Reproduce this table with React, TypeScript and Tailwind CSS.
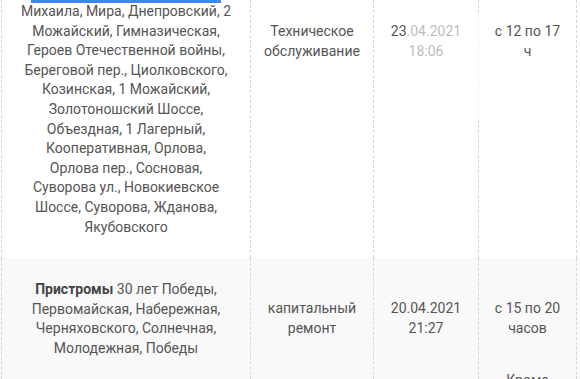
import React from "react";

const cell = "border-l border-dashed border-[#d6d6d6] px-[10px] text-center";

export default function App() {
  return (
    <div className="relative w-[580px] h-[379px] overflow-hidden bg-white font-['Roboto',sans-serif] text-[14px] leading-[19.6px] text-[#555]">
      <div className="flex flex-col">
        {/* row 1 */}
        <div className="flex">
          <div className={`${cell} ml-[1px] w-[249px] pb-[21px]`}>
            <div className="mx-[19px] h-[3px] -mb-px bg-[#3d86f5]" />
            Михаила, Мира, Днепровский, 2<br />
            Можайский, Гимназическая,<br />
            Героев Отечественной войны,<br />
            Береговой пер., Циолковского,<br />
            Козинская, 1 Можайский,<br />
            Золотоношский Шоссе,<br />
            Объездная, 1 Лагерный,<br />
            Кооперативная, Орлова,<br />
            Орлова пер., Сосновая,<br />
            Суворова ул., Новокиевское<br />
            Шоссе, Суворова, Жданова,<br />
            Якубовского
          </div>
          <div className={`${cell} w-[123px] pt-[22px]`}>
            Техническое
            <br />
            обслуживание
          </div>
          <div className={`${cell} w-[105px] pt-[22px]`}>
            23.04.2021
            <br />
            18:06
          </div>
          <div className={`${cell} w-[99px] border-r pt-[22px]`}>
            с 12 по 17
            <br />ч
          </div>
        </div>
        {/* row 2 */}
        <div className="flex bg-[#f9f9f9]">
          <div className={`${cell} ml-[1px] w-[249px] pt-[22px] pb-[40px]`}>
            <b className="font-bold text-[#444]">Пристромы</b> 30 лет Победы,
            <br />
            Первомайская, Набережная,
            <br />
            Черняховского, Солнечная,
            <br />
            Молодежная, Победы
          </div>
          <div className={`${cell} w-[123px] pt-[41px]`}>
            капитальный
            <br />
            ремонт
          </div>
          <div className={`${cell} w-[105px] pt-[41px]`}>
            20.04.2021
            <br />
            21:27
          </div>
          <div className={`${cell} w-[99px] border-r pt-[41px]`}>
            <p>
              с 15 по 20
              <br />
              часов
            </p>
            <p className="mt-[33px]">Кроме</p>
          </div>
        </div>
      </div>
      {/* faint watermark over the first date */}
      <div className="absolute left-[406px] top-[15px] w-[76px] h-[106px] bg-white/60" />
    </div>
  );
}
